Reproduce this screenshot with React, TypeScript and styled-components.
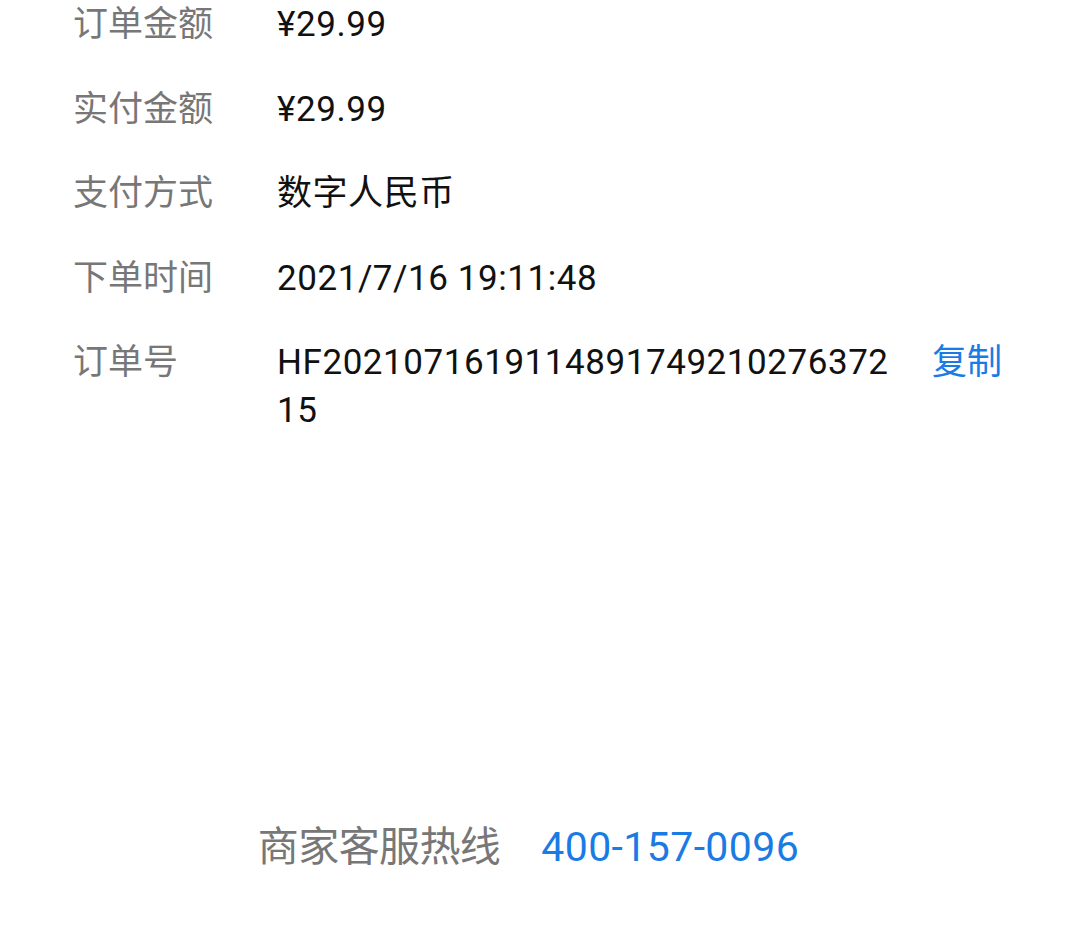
import React, { ReactElement } from 'react';
import styled, { createGlobalStyle } from 'styled-components';

const GlobalStyle = createGlobalStyle`
  html, body {
    margin: 0;
    padding: 0;
    background: #ffffff;
  }
  body {
    font-family: Roboto, "Noto Sans CJK SC", sans-serif;
    -webkit-font-smoothing: antialiased;
  }
`;

const Page = styled.div`
  height: 945px;
  display: flex;
  flex-direction: column;
  overflow: hidden;
  background: #ffffff;
`;

const List = styled.div`
  display: flex;
  flex-direction: column;
  gap: 36.5px;
  padding: 0 77px 0 73px;
  margin-top: 1px;
`;

const Row = styled.div`
  display: flex;
  align-items: flex-start;
  font-size: 35px;
  line-height: 48px;
`;

const Label = styled.div`
  width: 204px;
  flex-shrink: 0;
  color: #777777;
`;

const Value = styled.div<{ $breakAll?: boolean }>`
  flex: 1;
  color: #111111;
  word-break: ${(p) => (p.$breakAll ? 'break-all' : 'normal')};
  letter-spacing: 0.55px;
  padding-right: ${(p) => (p.$breakAll ? '30px' : '0')};
`;

const CopyButton = styled.button`
  flex-shrink: 0;
  border: none;
  background: none;
  padding: 0;
  font: inherit;
  color: #1a7be5;
  cursor: pointer;
`;

const Footer = styled.div`
  margin-top: auto;
  padding-bottom: 70px;
  display: flex;
  justify-content: center;
  align-items: center;
  gap: 41px;
  font-size: 41px;
  line-height: 56px;
  padding-right: 22px;
`;

const FooterLabel = styled.span`
  color: #777777;
  letter-spacing: -0.6px;
`;

const Phone = styled.a`
  color: #1a7be5;
  text-decoration: none;
  letter-spacing: 0.4px;
`;

type Item = { label: string; value: string; copy?: boolean };

const items: Item[] = [
  { label: '订单金额', value: '¥29.99' },
  { label: '实付金额', value: '¥29.99' },
  { label: '支付方式', value: '数字人民币' },
  { label: '下单时间', value: '2021/7/16 19:11:48' },
  { label: '订单号', value: 'HF202107161911489174921027637215', copy: true },
];

const App = (): ReactElement => (
  <>
    <GlobalStyle />
    <Page>
      <List>
        {items.map((item) => (
          <Row key={item.label}>
            <Label>{item.label}</Label>
            <Value $breakAll={item.copy}>{item.value}</Value>
            {item.copy && <CopyButton>复制</CopyButton>}
          </Row>
        ))}
      </List>
      <Footer>
        <FooterLabel>商家客服热线</FooterLabel>
        <Phone href="#">400-157-0096</Phone>
      </Footer>
    </Page>
  </>
);

export default App;
